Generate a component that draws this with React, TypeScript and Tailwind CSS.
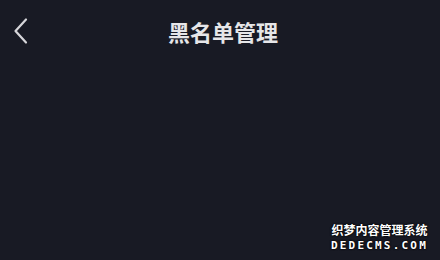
import React from 'react';

export default function App() {
  return (
    <div className="w-[440px] h-[260px] bg-[#181a24] flex flex-col font-['Noto_Sans_CJK_SC',sans-serif]">
      <header className="relative h-[62px] flex items-center justify-center">
        <button className="absolute left-[10px] top-[16px] w-[22px] h-[30px] flex items-center justify-center">
          <svg width="16" height="28" viewBox="0 0 16 28" fill="none">
            <path d="M13 2.5 L2.5 14 L13 25.5" stroke="#d6d6da" strokeWidth="2.2" strokeLinecap="round" strokeLinejoin="round" />
          </svg>
        </button>
        <h1 className="ml-[6px] text-[22px] font-bold text-[#e6e6e8] leading-none">黑名单管理</h1>
      </header>
      <main className="flex-1 flex flex-col justify-end items-end pr-[12px] pb-[9px]">
        <div className="flex flex-col items-center leading-none">
          <span className="text-[12px] font-bold text-white [text-shadow:0_0_2px_#000,0_0_2px_#000]">织梦内容管理系统</span>
          <span className="mt-[4px] text-[11px] font-bold text-white tracking-[2.2px] font-['DejaVu_Sans_Mono',monospace] [text-shadow:0_0_2px_#000,0_0_2px_#000]">DEDECMS.COM</span>
        </div>
      </main>
    </div>
  );
}
